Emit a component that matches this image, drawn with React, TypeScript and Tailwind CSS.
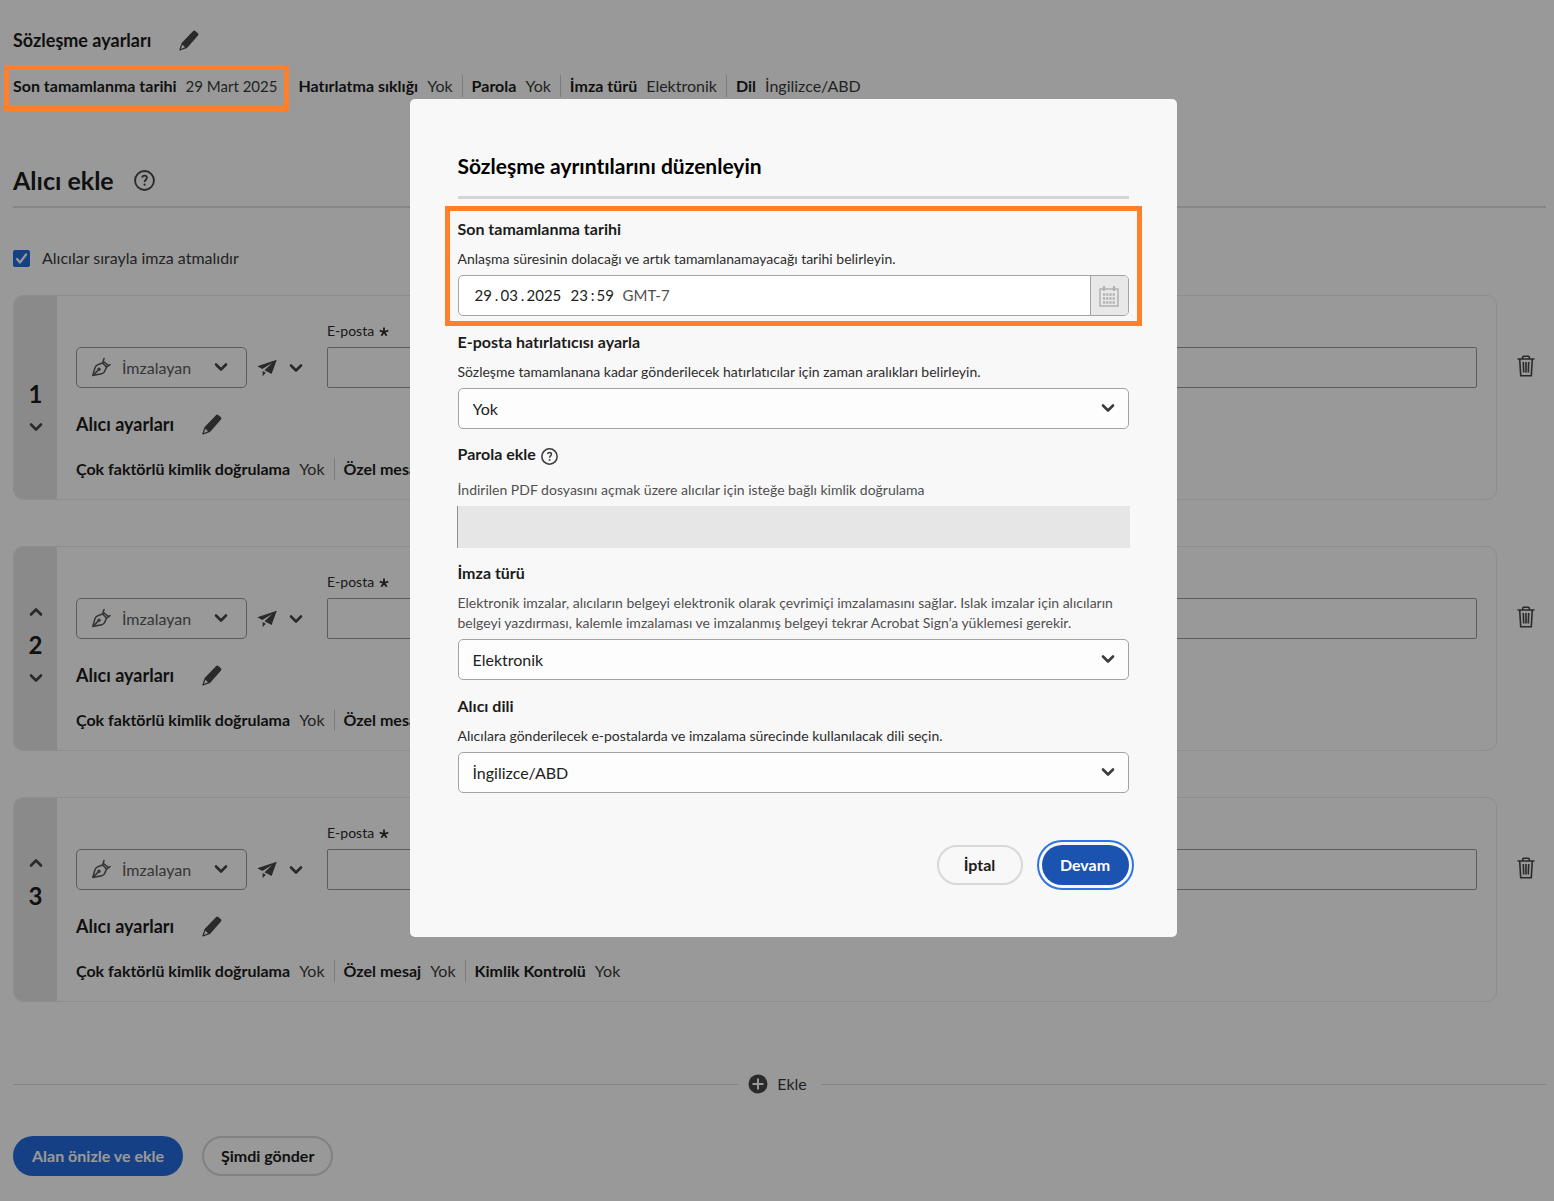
import { useState } from 'react';
import type { ReactNode } from 'react';

type Setting = {
  label: string;
  value: string;
};

const agreementSettings: Setting[] = [
  { label: 'Hatırlatma sıklığı', value: 'Yok' },
  { label: 'Parola', value: 'Yok' },
  { label: 'İmza türü', value: 'Elektronik' },
  { label: 'Dil', value: 'İngilizce/ABD' },
];

const recipientSettings: Setting[] = [
  { label: 'Çok faktörlü kimlik doğrulama', value: 'Yok' },
  { label: 'Özel mesaj', value: 'Yok' },
  { label: 'Kimlik Kontrolü', value: 'Yok' },
];

const recipients = [1, 2, 3];

function PencilIcon() {
  return (
    <svg viewBox="0 0 20 21" className="h-[21px] w-5 fill-[#474747]" aria-hidden="true">
      <path
        fillRule="evenodd"
        d="M14.2 1a1.6 1.6 0 0 1 2.1 0l2.6 2.3a1.5 1.5 0 0 1 .1 2.1L8 17.9 1.3 20.5a.7.7 0 0 1-.9-.9L2.6 13Zm-10.8 13.7-1.5 4.2 4.1-1.7Z"
      />
    </svg>
  );
}

function HelpIcon({ className }: { className: string }) {
  return (
    <svg viewBox="0 0 20 20" className={className} fill="none" stroke="currentColor" aria-hidden="true">
      <circle cx="10" cy="10" r="9" strokeWidth="1.8" />
      <path d="M7.7 7.3C8 5.9 9 5.4 10.1 5.4c1.3 0 2.2.8 2.2 2 0 1.8-2.2 2-2.2 4" strokeWidth="1.7" />
      <circle cx="10.1" cy="14" r="1.1" fill="currentColor" stroke="none" />
    </svg>
  );
}

function Chevron({ up = false }: { up?: boolean }) {
  return (
    <svg
      viewBox="0 0 14 10"
      className="h-[10px] w-[14px]"
      fill="none"
      stroke="currentColor"
      strokeWidth="2.6"
      strokeLinecap="round"
      strokeLinejoin="round"
      aria-hidden="true"
    >
      <path d={up ? 'M2 7.5 7 2.5l5 5' : 'M2 2.5l5 5 5-5'} />
    </svg>
  );
}

function NibIcon() {
  return (
    <svg
      viewBox="0 0 20 20"
      className="size-5"
      fill="none"
      stroke="currentColor"
      strokeWidth="1.6"
      strokeLinejoin="round"
      strokeLinecap="round"
      aria-hidden="true"
    >
      <path d="M1.8 18.4 4 10.6c.5-1.700 1.800-2.600 3.400-3.200L11.600 6l3.900 4-1.600 4c-.6 1.500-1.600 2.500-3.100 2.800Z" />
      <path d="m2.500 17.800 4.700-4.700M13 1.500 11.600 6M15.500 10l3.500-2.300M12.500 4.500l5 4.200" />
      <circle cx="8" cy="12.300" r="1" fill="currentColor" />
    </svg>
  );
}

function SendIcon() {
  return (
    <svg viewBox="0 0 20 18" className="h-[18px] w-5 fill-[#474747]" aria-hidden="true">
      <path d="M19.8.8.3 7.300l5 2.700L15.200 4 7.500 11.300l7.100 3.800L19.800.8ZM5.600 12v5.200l3.200-3.500Z" />
    </svg>
  );
}

function TrashIcon() {
  return (
    <svg viewBox="0 0 18 22" className="h-[22px] w-[18px]" fill="none" stroke="currentColor" strokeWidth="1.6" aria-hidden="true">
      <path d="M.5 4h17M5.700 4V2.200c0-.6.4-1 1-1h4.600c.6 0 1 .4 1 1V4M2.700 4l1 16.800h10.600l1-16.800M6.300 7l.4 10.500M9 7v10.500M11.700 7l-.4 10.500" />
    </svg>
  );
}

function CalendarIcon() {
  return (
    <svg viewBox="0 0 20 22" className="h-[22px] w-5 text-[#b1b1b1]" fill="none" stroke="currentColor" aria-hidden="true">
      <rect x="1" y="4" width="18" height="17" strokeWidth="1.5" />
      <path d="M5 1v5M15 1v5" strokeWidth="2.2" />
      <path d="M4 9.500h12M4 13.500h12M4 17.500h12" strokeWidth="2.400" strokeDasharray="2.200 1" />
    </svg>
  );
}

function SettingList({ items }: { items: Setting[] }) {
  return (
    <>
      {items.map((item, index) => (
        <div
          key={item.label}
          className={
            index === 0
              ? 'flex items-center gap-[9px] pr-[9px]'
              : 'flex items-center gap-[9px] border-l border-[#cfcfcf] px-[9px]'
          }
        >
          <span className="font-bold text-[#1c1c1c]">{item.label}</span>
          <span className="text-[#3a3a3a]">{item.value}</span>
        </div>
      ))}
    </>
  );
}

function RecipientCard({ order }: { order: number }) {
  const emailId = `email-${order}`;

  return (
    <li className="flex items-start">
      <article className="flex h-[205px] flex-1 overflow-hidden rounded-[10px] border border-[#ebebeb]">
        <div className="flex w-[43px] flex-col items-center justify-center gap-4 bg-[#e6e6e6] pb-2 text-[#474747]">
          {order > 1 ? (
            <button type="button" aria-label="Yukarı taşı">
              <Chevron up />
            </button>
          ) : (
            <span className="h-[10px]" />
          )}
          <span className="text-[24px] leading-6 font-bold text-[#1c1c1c]">{order}</span>
          {order < recipients.length ? (
            <button type="button" aria-label="Aşağı taşı">
              <Chevron />
            </button>
          ) : (
            <span className="h-[10px]" />
          )}
        </div>

        <div className="flex-1 px-[19px] pt-[25px]">
          <div className="flex items-end">
            <div className="relative w-[171px] text-[#5a5a5a]">
              <select
                aria-label="Rol"
                className="h-[41px] w-full appearance-none rounded-[5px] border border-[#999] pl-[45px] text-[16px]"
              >
                <option>İmzalayan</option>
              </select>
              <span className="pointer-events-none absolute top-[10px] left-[15px]">
                <NibIcon />
              </span>
              <span className="pointer-events-none absolute top-[15px] right-[19px] text-[#474747]">
                <Chevron />
              </span>
            </div>
            <button type="button" aria-label="Teslim yöntemi" className="ml-[10px] flex h-[41px] items-center gap-3 text-[#474747]">
              <SendIcon />
              <Chevron />
            </button>
            <div className="ml-6 flex-1">
              <label htmlFor={emailId} className="flex h-[26px] items-start gap-[5px] text-[14px] leading-5 text-[#2c2c2c]">
                E-posta
                <svg viewBox="0 0 10 10" className="mt-[6px] size-[10px]" stroke="currentColor" strokeWidth="1.8" aria-hidden="true">
                  <path d="M5 5V.5M5 5l4.300-1.400M5 5l2.700 3.700M5 5 2.300 8.700M5 5 .7 3.600" />
                </svg>
              </label>
              <input id={emailId} type="email" className="block h-[41px] w-full rounded-[2px] border border-[#999] px-3" />
            </div>
          </div>

          <div className="mt-6 flex items-center gap-7">
            <h3 className="text-[18px] leading-6 font-bold text-[#1c1c1c]">Alıcı ayarları</h3>
            <button type="button" aria-label="Alıcı ayarlarını düzenle">
              <PencilIcon />
            </button>
          </div>
          <div className="mt-[22px] flex text-[16px] leading-[22px]">
            <SettingList items={recipientSettings} />
          </div>
        </div>
      </article>
      <button type="button" aria-label="Alıcıyı sil" className="mt-[60px] mr-[11px] ml-5 text-[#474747]">
        <TrashIcon />
      </button>
    </li>
  );
}

function FieldSelect({ id, value }: { id: string; value: string }) {
  return (
    <div className="relative">
      <select
        id={id}
        className="block h-[41px] w-full appearance-none rounded-[5px] border border-[#a3a3a3] bg-[#fdfdfd] px-[14px] text-[16px] text-[#222]"
      >
        <option>{value}</option>
      </select>
      <span className="pointer-events-none absolute top-[15px] right-[14px] text-[#3c3c3c]">
        <Chevron />
      </span>
    </div>
  );
}

function FieldLabel({ htmlFor, children }: { htmlFor: string; children: ReactNode }) {
  return (
    <label htmlFor={htmlFor} className="block text-[16px] leading-[22px] font-bold text-[#1c1c1c]">
      {children}
    </label>
  );
}

function DateSegment({ label, value, wide = false }: { label: string; value: string; wide?: boolean }) {
  return (
    <input
      aria-label={label}
      defaultValue={value}
      className={wide ? 'w-9 bg-transparent' : 'w-[18px] bg-transparent'}
    />
  );
}

function AgreementDialog() {
  return (
    <div className="fixed inset-0 z-10 flex items-start justify-center bg-black/40 pt-[99px] pl-8">
      <section
        role="dialog"
        aria-modal="true"
        aria-labelledby="dialog-title"
        className="w-full max-w-[767px] rounded-[5px] bg-[#f8f8f8] px-12 py-[52px]"
      >
        <h2 id="dialog-title" className="pb-[15px] text-[21px] leading-[30px] font-bold text-black">
          Sözleşme ayrıntılarını düzenleyin
        </h2>
        <hr className="border-t-[3px] border-[#d3d5db]" />

        <div className="-mx-[13px] mt-[7px] border-[5px] border-[#ff7f2a] px-2 pt-[7px] pb-[5px]">
          <FieldLabel htmlFor="deadline-day">Son tamamlanma tarihi</FieldLabel>
          <p className="mt-[9px] pb-[6px] text-[14px] leading-5 text-[#2c2c2c]">
            Anlaşma süresinin dolacağı ve artık tamamlanamayacağı tarihi belirleyin.
          </p>
          <div className="flex h-[41px] overflow-hidden rounded-[5px] border border-[#a3a3a3] bg-white">
            <div className="flex flex-1 items-center pl-4 text-[15px] text-[#222]">
              <input id="deadline-day" defaultValue="29" className="w-[18px] bg-transparent" />
              <span className="w-2 text-center">.</span>
              <DateSegment label="Ay" value="03" />
              <span className="w-2 text-center">.</span>
              <DateSegment label="Yıl" value="2025" wide />
              <span className="w-2" />
              <DateSegment label="Saat" value="23" />
              <span className="w-2 text-center">:</span>
              <DateSegment label="Dakika" value="59" />
              <span className="pl-2 text-[#505050]">GMT-7</span>
            </div>
            <button
              type="button"
              aria-label="Takvim"
              className="flex w-[38px] items-center justify-center border-l border-[#a3a3a3] bg-[#e8e8e8]"
            >
              <CalendarIcon />
            </button>
          </div>
        </div>

        <div className="mt-[5px]">
          <FieldLabel htmlFor="reminder">E-posta hatırlatıcısı ayarla</FieldLabel>
          <p className="mt-[9px] pb-[6px] text-[14px] leading-5 text-[#2c2c2c]">
            Sözleşme tamamlanana kadar gönderilecek hatırlatıcılar için zaman aralıkları belirleyin.
          </p>
          <FieldSelect id="reminder" value="Yok" />
        </div>

        <div className="mt-[14px]">
          <div className="flex items-center gap-[5px]">
            <FieldLabel htmlFor="password">Parola ekle</FieldLabel>
            <HelpIcon className="mt-1 size-[17px] text-[#3c3c3c]" />
          </div>
          <p className="mt-[15px] pb-[6px] text-[14px] leading-5 text-[#505050]">
            İndirilen PDF dosyasını açmak üzere alıcılar için isteğe bağlı kimlik doğrulama
          </p>
          <div className="-mx-px">
            <input
              id="password"
              type="password"
              disabled
              className="block h-[42px] w-full border-l border-[#909090] bg-[#e6e6e6] px-[14px]"
            />
          </div>
        </div>

        <div className="mt-[14px]">
          <FieldLabel htmlFor="signature-type">İmza türü</FieldLabel>
          <p className="mt-[9px] pb-[6px] text-[14px] leading-5 text-[#505050]">
            Elektronik imzalar, alıcıların belgeyi elektronik olarak çevrimiçi imzalamasını sağlar. Islak imzalar için alıcıların belgeyi yazdırması, kalemle imzalaması ve imzalanmış belgeyi tekrar Acrobat Sign’a yüklemesi gerekir.
          </p>
          <FieldSelect id="signature-type" value="Elektronik" />
        </div>

        <div className="mt-[15px]">
          <FieldLabel htmlFor="language">Alıcı dili</FieldLabel>
          <p className="mt-[9px] pb-[6px] text-[14px] leading-5 text-[#2c2c2c]">
            Alıcılara gönderilecek e-postalarda ve imzalama sürecinde kullanılacak dili seçin.
          </p>
          <FieldSelect id="language" value="İngilizce/ABD" />
        </div>

        <div className="mt-[52px] flex justify-end gap-[19px]">
          <button type="button" className="h-10 w-[86px] rounded-full border-2 border-[#d8d8d8] text-[16px] font-bold text-[#1c1c1c]">
            İptal
          </button>
          <button
            type="button"
            className="h-10 w-[87px] rounded-full bg-[#1b53b0] text-[16px] font-bold text-white outline-2 outline-offset-3 outline-[#2f74e6]"
          >
            Devam
          </button>
        </div>
      </section>
    </div>
  );
}

export default function App() {
  const [ordered, setOrdered] = useState(true);

  return (
    <div className="min-h-screen bg-white font-['Lato',sans-serif] text-[#1c1c1c] [font-variant-ligatures:none]">
      <main className="pt-7 pr-2 pb-[25px] pl-[13px]">
        <div className="flex items-center gap-7">
          <h2 className="text-[18px] leading-6 font-bold">Sözleşme ayarları</h2>
          <button type="button" aria-label="Sözleşme ayarlarını düzenle">
            <PencilIcon />
          </button>
        </div>

        <div className="mt-[23px] flex text-[16px] leading-[22px]">
          <div className="relative flex items-center gap-[9px] pr-[21px]">
            <span className="font-bold">Son tamamlanma tarihi</span>
            <span className="text-[15px] text-[#3a3a3a]">29 Mart 2025</span>
            <span className="absolute -top-[10px] right-[9px] -bottom-[14px] -left-[9px] z-20 border-[5px] border-[#ff7f2a]" />
          </div>
          <SettingList items={agreementSettings} />
        </div>

        <div className="mt-[67px] flex items-center gap-5 border-b-2 border-[#e0e0e0] pb-[10px]">
          <h1 className="text-[25px] leading-8 font-bold">Alıcı ekle</h1>
          <HelpIcon className="size-[21px] text-[#474747]" />
        </div>

        <div className="mt-[39px] flex items-center gap-3">
          <span className="relative flex">
            <input
              id="ordered"
              type="checkbox"
              checked={ordered}
              onChange={(event) => setOrdered(event.target.checked)}
              className="peer size-[17px] appearance-none rounded-[2px] border border-[#256bde] checked:bg-[#256bde]"
            />
            <svg
              viewBox="0 0 17 17"
              className="pointer-events-none absolute inset-0 hidden size-[17px] peer-checked:block"
              fill="none"
              stroke="white"
              strokeWidth="2.2"
              strokeLinecap="round"
              strokeLinejoin="round"
              aria-hidden="true"
            >
              <path d="m4 9 3 3.500 6-8" />
            </svg>
          </span>
          <label htmlFor="ordered" className="text-[16px] leading-[22px] text-[#3a3a3a]">
            Alıcılar sırayla imza atmalıdır
          </label>
        </div>

        <ul className="mt-[26px] flex flex-col gap-[46px]">
          {recipients.map((order) => (
            <RecipientCard key={order} order={order} />
          ))}
        </ul>

        <div className="mt-[70px] flex items-center">
          <span className="h-px flex-1 bg-[#dcdcdc]" />
          <button type="button" className="mx-[10px] flex items-center gap-[9px] pr-1 text-[16px] leading-6 text-[#3a3a3a]">
            <svg viewBox="0 0 20 20" className="size-5" aria-hidden="true">
              <circle cx="10" cy="10" r="9.5" className="fill-[#474747]" />
              <path d="M10 4.500v11M4.500 10h11" stroke="white" strokeWidth="2" />
            </svg>
            Ekle
          </button>
          <span className="h-px flex-1 bg-[#dcdcdc]" />
        </div>

        <div className="mt-10 flex gap-[19px]">
          <button type="button" className="h-10 rounded-full bg-[#256bde] px-[19px] text-[16px] font-bold text-white">
            Alan önizle ve ekle
          </button>
          <button type="button" className="h-10 rounded-full border-2 border-[#d8d8d8] px-[17px] text-[16px] font-bold">
            Şimdi gönder
          </button>
        </div>
      </main>

      <AgreementDialog />
    </div>
  );
}
